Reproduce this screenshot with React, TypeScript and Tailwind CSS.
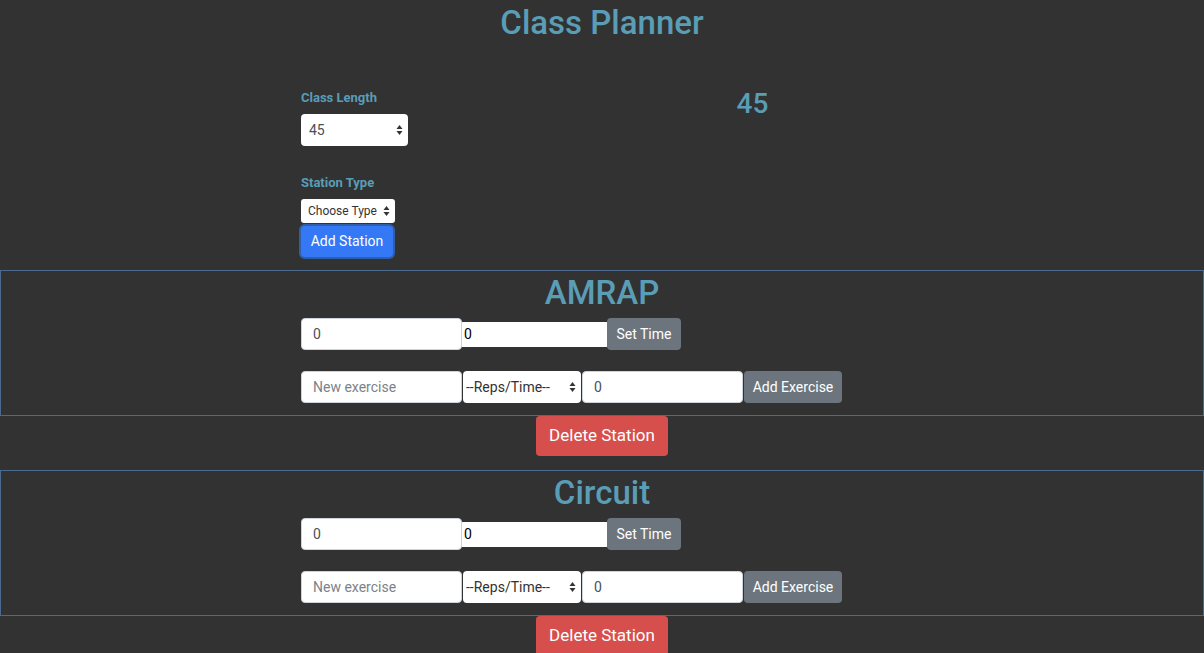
import React from "react";

const stations = ["AMRAP", "Circuit"];

function SelectArrows() {
    return (
        <svg width="7" height="11" viewBox="0 0 7 11" className="absolute right-[5px] top-1/2 -translate-y-1/2">
            <path d="M3.5 0.5 L6.5 4.5 H0.5 Z" fill="#333" />
            <path d="M3.5 10.5 L6.5 6.5 H0.5 Z" fill="#333" />
        </svg>
    );
}

function Station({ name }: { name: string }) {
    return (
        <div className="flex flex-col items-center">
            <div className="w-full border border-[#4a6a8e] pb-[12px]">
                <h2 className="text-center text-[33px] font-medium leading-[40px] text-[#5a9db6] mt-[2px]">{name}</h2>
                <div className="mx-auto w-[602px] mt-[5px]">
                    <div className="flex items-center">
                        <div className="w-[161px] h-[32px] bg-white rounded-[4px] border border-[#ced4da] px-[11px] flex items-center text-[14px] text-[#495057]">0</div>
                        <div className="w-[145px] h-[25px] bg-white flex items-center px-[2px] text-[14px] text-black">0</div>
                        <button className="w-[74px] h-[32px] bg-[#6c757d] rounded-[4px] text-white text-[14px]">Set Time</button>
                    </div>
                    <div className="flex items-center mt-[21px]">
                        <div className="w-[161px] h-[32px] bg-white rounded-[4px] border border-[#ced4da] px-[11px] flex items-center text-[14px] text-[#7b838a]">New exercise</div>
                        <div className="relative w-[118px] h-[32px] bg-white rounded-[4px] ml-[1px] px-[3px] flex items-center text-[14px] text-[#333]">
                            --Reps/Time--
                            <SelectArrows />
                        </div>
                        <div className="w-[161px] h-[32px] bg-white rounded-[4px] border border-[#ced4da] ml-[1px] px-[11px] flex items-center text-[14px] text-[#495057]">0</div>
                        <button className="w-[98px] h-[32px] bg-[#6c757d] rounded-[4px] ml-[1px] text-white text-[14px]">Add Exercise</button>
                    </div>
                </div>
            </div>
            <button className="w-[132px] h-[40px] bg-[#d64f4c] rounded-[4px] text-white text-[17px]">Delete Station</button>
        </div>
    );
}

export default function App() {
    return (
        <div className="min-h-[653px] bg-[#323232] font-['Roboto',sans-serif]">
            <h1 className="pt-[2px] text-center text-[33px] font-medium leading-[42px] text-[#5a9db6]">Class Planner</h1>

            <div className="mx-auto w-[602px] mt-[44px] flex">
                <div className="w-[301px]">
                    <label className="block text-[13px] font-bold text-[#5a9db6] leading-[20px]">Class Length</label>
                    <div className="relative mt-[6px] w-[107px] h-[32px] bg-white rounded-[4px] px-[8px] flex items-center text-[14px] text-[#495057]">
                        45
                        <SelectArrows />
                    </div>
                    <label className="block mt-[27px] text-[13px] font-bold text-[#5a9db6] leading-[20px]">Station Type</label>
                    <div className="relative mt-[6px] w-[94px] h-[24px] bg-white rounded-[3px] px-[7px] flex items-center text-[12px] text-[#333]">
                        Choose Type
                        <SelectArrows />
                    </div>
                    <button className="mt-[3px] w-[92px] h-[31px] bg-[#3478f6] rounded-[4px] text-white text-[14px] ring-2 ring-[#2f5fa8]">Add Station</button>
                </div>
                <div className="w-[301px] flex justify-center">
                    <h3 className="text-[28px] font-medium text-[#5a9db6] leading-[34px] mt-[-1px]">45</h3>
                </div>
            </div>

            <div className="mt-[13px] flex flex-col gap-[14px]">
                {stations.map((s, i) => (
                    <Station key={`${s}-${i}`} name={s} />
                ))}
            </div>
        </div>
    );
}
